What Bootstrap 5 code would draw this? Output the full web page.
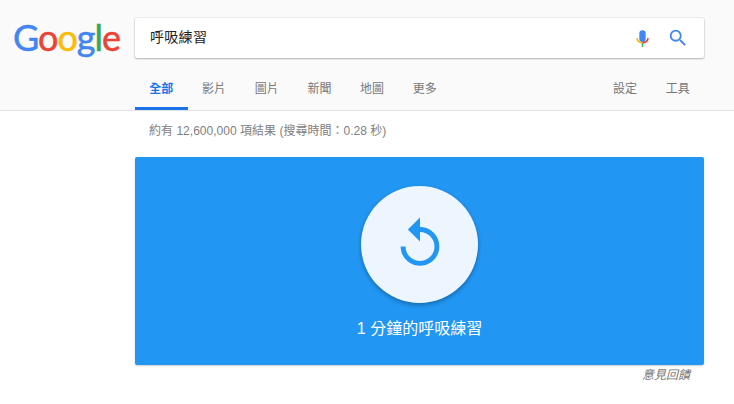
<!DOCTYPE html>
<html lang="zh-Hant">
<head>
    <meta charset="UTF-8">
    <title>呼吸練習</title>
    <link href="https://cdn.jsdelivr.net/npm/bootstrap@5.3.3/dist/css/bootstrap.min.css" rel="stylesheet">
    <style>
        body { font-family: "Liberation Sans", Arial, "Noto Sans CJK TC", sans-serif; background: #fff; overflow: hidden; }
        .top-head { background: #fafafa; border-bottom: 1px solid #e4e4e4; height: 111px; padding-top: 18px; }
        .logo-wrap { width: 135px; padding-left: 13px; height: 40px; }
        .g-logo { font-family: Lato, sans-serif; font-size: 36px; line-height: 39px; letter-spacing: -1px; font-weight: 400; -webkit-text-stroke: .5px currentColor; }
        .g-blue { color: #4285f4; }
        .g-red { color: #ea4335; }
        .g-yellow { color: #fbbc05; }
        .g-green { color: #34a853; }
        .search-box { width: 569px; height: 40px; background: #fff; border-radius: 2px; box-shadow: 0 1px 2px rgba(0,0,0,.25), 0 0 0 1px rgba(0,0,0,.05); padding: 0 15px 0 15px; font-size: 14px; color: #222; }
        .query-text { letter-spacing: .3px; padding-bottom: 2px; }
        .tab-row { margin-left: 135px; width: 569px; height: 52px; font-size: 12px; }
        .tab-item { width: 52.7px; text-align: center; color: #777; text-decoration: none; padding-top: 9px; height: 37px; margin-top: 15px; line-height: 14px; }
        .tab-item.on { color: #1a73e8; font-weight: 700; border-bottom: 3px solid #1a73e8; }
        .result-stats { margin-left: 149px; margin-top: 12px; font-size: 12px; line-height: 16px; color: #808080; letter-spacing: .02px; }
        .breath-card { margin: 18px 0 0 135px; width: 569px; height: 208px; background: #2196f3; border-radius: 2px; box-shadow: 0 1px 2px rgba(0,0,0,.2); padding-top: 29px; }
        .breath-circle { width: 117px; height: 117px; border-radius: 50%; background: #edf6fe; box-shadow: 0 2px 4px rgba(0,0,0,.3); }
        .breath-circle svg { margin-bottom: 2px; }
        .breath-label { color: #fff; font-size: 16px; line-height: 20px; margin-top: 16px; }
        .feedback { margin: 3px 0 0 0; width: 690px; text-align: right; font-size: 12px; font-style: italic; line-height: 14px; color: #777; }
        .mic-icon { margin-right: 18px; }
    </style>
</head>
<body>

<div class="top-head">
    <div class="d-flex">
        <div class="logo-wrap">
            <div class="g-logo"><span class="g-blue">G</span><span class="g-red">o</span><span class="g-yellow">o</span><span class="g-blue">g</span><span class="g-green">l</span><span class="g-red">e</span></div>
        </div>
        <div class="search-box d-flex align-items-center">
            <span class="flex-grow-1 query-text">呼吸練習</span>
            <svg width="13" height="17" viewBox="0 0 14 18" class="mic-icon">
                <rect x="3.6" y="0" width="6.8" height="13" rx="3.4" fill="#4285f4"/>
                <path d="M1 8.5C1.5 11.5 3.5 13.5 7 13.5" fill="none" stroke="#fbbc05" stroke-width="1.8"/>
                <path d="M13 8.5C12.5 11.5 10.5 13.5 7 13.5" fill="none" stroke="#ea4335" stroke-width="1.8"/>
                <rect x="6.2" y="14" width="1.6" height="4" fill="#34a853"/>
            </svg>
            <svg width="22" height="22" viewBox="0 0 24 24">
                <path fill="#4285f4" d="M15.5 14h-.79l-.28-.27A6.47 6.47 0 0 0 16 9.5 6.5 6.5 0 1 0 9.5 16c1.61 0 3.09-.59 4.23-1.57l.27.28v.79l5 4.99L20.49 19l-4.99-5zm-6 0C7.01 14 5 11.99 5 9.5S7.01 5 9.5 5 14 7.01 14 9.5 11.99 14 9.5 14z"/>
            </svg>
        </div>
    </div>
    <div class="tab-row d-flex">
        <a class="tab-item on" href="#">全部</a>
        <a class="tab-item" href="#">影片</a>
        <a class="tab-item" href="#">圖片</a>
        <a class="tab-item" href="#">新聞</a>
        <a class="tab-item" href="#">地圖</a>
        <a class="tab-item" href="#">更多</a>
        <a class="tab-item ms-auto" href="#">設定</a>
        <a class="tab-item" href="#">工具</a>
    </div>
</div>

<div class="result-stats">約有 12,600,000 項結果 (搜尋時間：0.28 秒)</div>

<div class="breath-card d-flex flex-column align-items-center">
    <div class="breath-circle d-flex align-items-center justify-content-center">
        <svg width="58" height="58" viewBox="0 0 24 24">
            <path fill="#2196f3" d="M12 5V1L7 6l5 5V7c3.31 0 6 2.69 6 6s-2.69 6-6 6-6-2.69-6-6H4c0 4.42 3.58 8 8 8s8-3.58 8-8-3.58-8-8-8z"/>
        </svg>
    </div>
    <div class="breath-label">1 分鐘的呼吸練習</div>
</div>

<div class="feedback">意見回饋</div>

</body>
</html>
